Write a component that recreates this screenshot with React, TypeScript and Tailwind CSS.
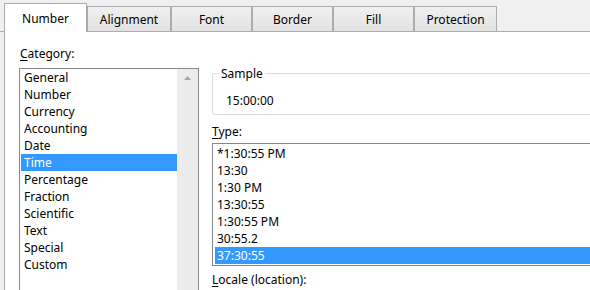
import React from "react";

const tabs = [
  { label: "Number", w: "w-[83px]", active: true },
  { label: "Alignment", w: "w-[84px]" },
  { label: "Font", w: "w-[81px]" },
  { label: "Border", w: "w-[81px]" },
  { label: "Fill", w: "w-[81px]" },
  { label: "Protection", w: "w-[83px]" },
];

const categories = [
  "General",
  "Number",
  "Currency",
  "Accounting",
  "Date",
  "Time",
  "Percentage",
  "Fraction",
  "Scientific",
  "Text",
  "Special",
  "Custom",
];

const types = ["*1:30:55 PM", "13:30", "1:30 PM", "13:30:55", "1:30:55 PM", "30:55.2", "37:30:55"];

export default function App() {
  return (
    <div
      className="w-[590px] h-[290px] overflow-hidden bg-[#f0f0f0] text-[12px] text-black"
      style={{ fontFamily: '"Noto Sans", "Open Sans", sans-serif' }}
    >
      <div className="flex items-end h-[32px] pl-[4px] border-b border-[#acacac]">
        {tabs.map((t) =>
          t.active ? (
            <div
              key={t.label}
              className={`${t.w} shrink-0 h-[29px] -mb-px bg-white border border-b-0 border-[#acacac] flex items-center justify-center pt-[1px] relative z-10`}
            >
              {t.label}
            </div>
          ) : (
            <div
              key={t.label}
              className={`${t.w} shrink-0 h-[25px] border border-b-0 border-[#acacac] bg-gradient-to-b from-[#f0f0f0] to-[#e2e2e2] flex items-center justify-center pt-[2px]`}
            >
              {t.label}
            </div>
          )
        )}
      </div>
      <div className="ml-[4px] h-[300px] bg-white border-l border-[#acacac] flex pt-[13px] pl-[14px]">
        <div className="w-[180px] shrink-0 flex flex-col">
          <div className="h-[17px] leading-[17px] pl-[1px]">
            <span className="underline underline-offset-2">C</span>ategory:
          </div>
          <div className="mt-[6px] h-[240px] border border-[#828790] flex">
            <div className="flex-1 pl-px">
              {categories.map((c) => (
                <div
                  key={c}
                  className={`h-[17px] leading-[17px] pl-[3px] ${c === "Time" ? "bg-[#3399ff] text-white" : ""}`}
                >
                  {c}
                </div>
              ))}
            </div>
            <div className="w-[21px] shrink-0 bg-[#ececec] flex justify-center pt-[7px]">
              <svg width="7" height="4" viewBox="0 0 7 4">
                <path d="M3.5 0 L7 4 L0 4 Z" fill="#a6a6a6" />
              </svg>
            </div>
          </div>
        </div>
        <div className="ml-[13px] w-[400px] shrink-0 flex flex-col">
          <div className="mt-[28px] h-[42px] border border-[#dcdcdc] rounded-[3px] relative">
            <div className="absolute left-[6px] -top-[9px] bg-white px-[2px] h-[17px] leading-[17px]">Sample</div>
            <div className="absolute left-[13px] top-[18px] h-[17px] leading-[17px]">15:00:00</div>
          </div>
          <div className="mt-[8px] h-[17px] leading-[17px]">
            <span className="underline underline-offset-2">T</span>ype:
          </div>
          <div className="mt-[3px] h-[123px] border border-[#828790] pt-[1px] pl-[2px]">
            {types.map((t, i) => (
              <div
                key={t}
                className={`h-[17px] leading-[17px] pl-[2px] ${i === types.length - 1 ? "bg-[#3399ff] text-white" : ""}`}
              >
                {t}
              </div>
            ))}
          </div>
          <div className="mt-[5px] h-[17px] leading-[17px]">
            <span className="underline underline-offset-2">L</span>ocale (location):
          </div>
        </div>
      </div>
    </div>
  );
}
